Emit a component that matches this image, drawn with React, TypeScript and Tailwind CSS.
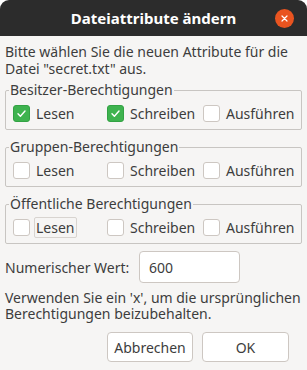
import React, { useState } from 'react';

type Perm = { r: boolean; w: boolean; x: boolean };

const Check: React.FC<{ checked: boolean; onChange: () => void }> = ({ checked, onChange }) => (
  <button
    type="button"
    onClick={onChange}
    className={`w-[17px] h-[17px] rounded-[3px] flex items-center justify-center shrink-0 ${
      checked ? 'bg-[#3eb34f] border border-[#33a244]' : 'bg-white border border-[#cdc7c2]'
    }`}
  >
    {checked && (
      <svg width="11" height="11" viewBox="0 0 11 11" fill="none">
        <path d="M2 5.8 L4.4 8.2 L9 3" stroke="white" strokeWidth="1.4" strokeLinecap="round" strokeLinejoin="round" />
      </svg>
    )}
  </button>
);

const Group: React.FC<{
  title: string;
  value: Perm;
  onToggle: (k: keyof Perm) => void;
  focusFirst?: boolean;
}> = ({ title, value, onToggle, focusFirst }) => (
  <fieldset className="border border-[#c8c5c2] rounded-[2px] px-[3px] pb-[5px]">
    <legend className="px-px leading-[16px]">{title}</legend>
    <div className="grid grid-cols-[94px_96px_1fr] pl-[4px] mt-[4px]">
      {([
        ['r', 'Lesen'],
        ['w', 'Schreiben'],
        ['x', 'Ausführen'],
      ] as [keyof Perm, string][]).map(([k, label], i) => (
        <label key={k} className="flex items-center gap-[4px] h-[22px] cursor-default">
          <Check checked={value[k]} onChange={() => onToggle(k)} />
          <span
            className={`leading-[19px] px-px ${
              focusFirst && i === 0 ? 'border border-[#d8d4d0] rounded-[2px]' : 'border border-transparent'
            }`}
          >
            {label}
          </span>
        </label>
      ))}
    </div>
  </fieldset>
);

const App: React.FC = () => {
  const [owner, setOwner] = useState<Perm>({ r: true, w: true, x: false });
  const [group, setGroup] = useState<Perm>({ r: false, w: false, x: false });
  const [other, setOther] = useState<Perm>({ r: false, w: false, x: false });

  const toggle = (set: React.Dispatch<React.SetStateAction<Perm>>) => (k: keyof Perm) =>
    set(p => ({ ...p, [k]: !p[k] }));

  const calc = (p: Perm) => (p.r ? 4 : 0) + (p.w ? 2 : 0) + (p.x ? 1 : 0);
  const numeric = `${calc(owner)}${calc(group)}${calc(other)}`;

  return (
    <div className="w-[307px] h-[370px] bg-white" style={{ fontFamily: '"Noto Sans", sans-serif' }}>
      <div className="w-full h-full rounded-t-[9px] overflow-hidden bg-[#f6f5f4] flex flex-col text-[14px] text-[#3d3d3d]">
        {/* Titlebar */}
        <div className="h-[36px] bg-[#2c2c2c] flex items-center justify-center relative shrink-0">
          <span className="text-white font-bold text-[15px]">Dateiattribute ändern</span>
          <button className="absolute right-[13px] top-[9px] w-[19px] h-[19px] rounded-full bg-[#e95420] flex items-center justify-center">
            <svg width="7" height="7" viewBox="0 0 7 7">
              <path d="M1 1 L6 6 M6 1 L1 6" stroke="white" strokeWidth="1.2" strokeLinecap="round" />
            </svg>
          </button>
        </div>

        <div className="flex flex-col px-[5px] pt-[7px]">
          <p className="leading-[17px]">
            Bitte wählen Sie die neuen Attribute für die Datei "secret.txt" aus.
          </p>

          <div className="flex flex-col gap-[9px] mt-[5px]">
            <Group title="Besitzer-Berechtigungen" value={owner} onToggle={toggle(setOwner)} />
            <Group title="Gruppen-Berechtigungen" value={group} onToggle={toggle(setGroup)} />
            <Group title="Öffentliche Berechtigungen" value={other} onToggle={toggle(setOther)} focusFirst />
          </div>

          <div className="flex items-center mt-[7px]">
            <span className="w-[134px]">Numerischer Wert:</span>
            <input
              value={numeric}
              readOnly
              className="w-[101px] h-[32px] bg-white border border-[#cdc7c2] rounded-[4px] px-[9px] outline-none text-[14px] text-[#3d3d3d]"
            />
          </div>

          <p className="leading-[16px] mt-[7px]">
            Verwenden Sie ein 'x', um die ursprünglichen Berechtigungen beizubehalten.
          </p>

          <div className="flex justify-end gap-[9px] mt-[10px] pr-[13px]">
            <button className="w-[86px] h-[30px] bg-white border border-[#cdc7c2] rounded-[4px]">Abbrechen</button>
            <button className="w-[87px] h-[30px] bg-white border border-[#cdc7c2] rounded-[4px]">OK</button>
          </div>
        </div>
      </div>
    </div>
  );
};

export default App;
